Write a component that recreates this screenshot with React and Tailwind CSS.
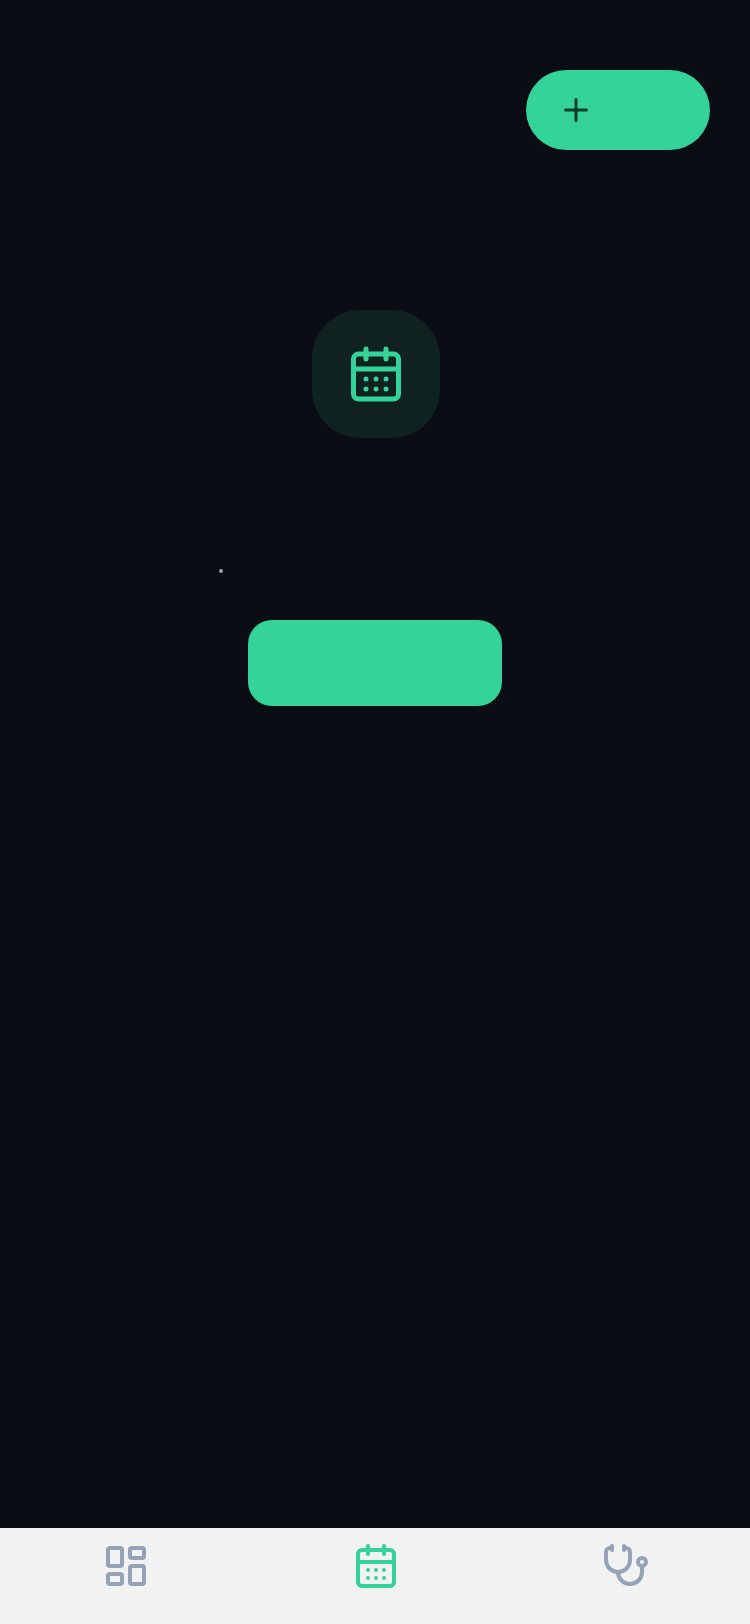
import React from "react";
import { CalendarDays, LayoutDashboard, Plus, Stethoscope } from "lucide-react";

function NavItem({ icon: Icon, active }) {
  return (
    <div className="flex justify-center pt-[14px]">
      <Icon size={48} strokeWidth={2} className={active ? "text-[#34d399]" : "text-[#94a3b8]"} />
    </div>
  );
}

export default function App() {
  return (
    <div className="flex h-[1624px] w-[750px] flex-col bg-[#0a0e14] font-['Inter',sans-serif]">
      <main className="flex flex-1 flex-col">
        <div className="flex justify-end pr-[40px] pt-[70px]">
          <button className="flex h-[80px] w-[184px] items-center rounded-full bg-[#34d399] pl-[32px] text-[#0b3b2c]">
            <Plus size={36} strokeWidth={2} />
          </button>
        </div>

        <div className="mt-[160px] flex h-[128px] w-[128px] translate-x-px items-center justify-center self-center rounded-[48px] bg-[#0f2220] text-[#34d399]">
          <CalendarDays size={60} strokeWidth={2} />
        </div>

        <div className="ml-[219px] mt-[131px] h-[4px] w-[4px] rounded-full bg-[#9ca3af]" />

        <button className="mt-[47px] h-[86px] w-[254px] self-center rounded-[24px] bg-[#34d399]" />
      </main>

      <nav className="grid h-[96px] grid-cols-[repeat(3,250px)] bg-[#f2f2f2] pl-px">
        <NavItem icon={LayoutDashboard} />
        <NavItem icon={CalendarDays} active />
        <NavItem icon={Stethoscope} />
      </nav>
    </div>
  );
}
